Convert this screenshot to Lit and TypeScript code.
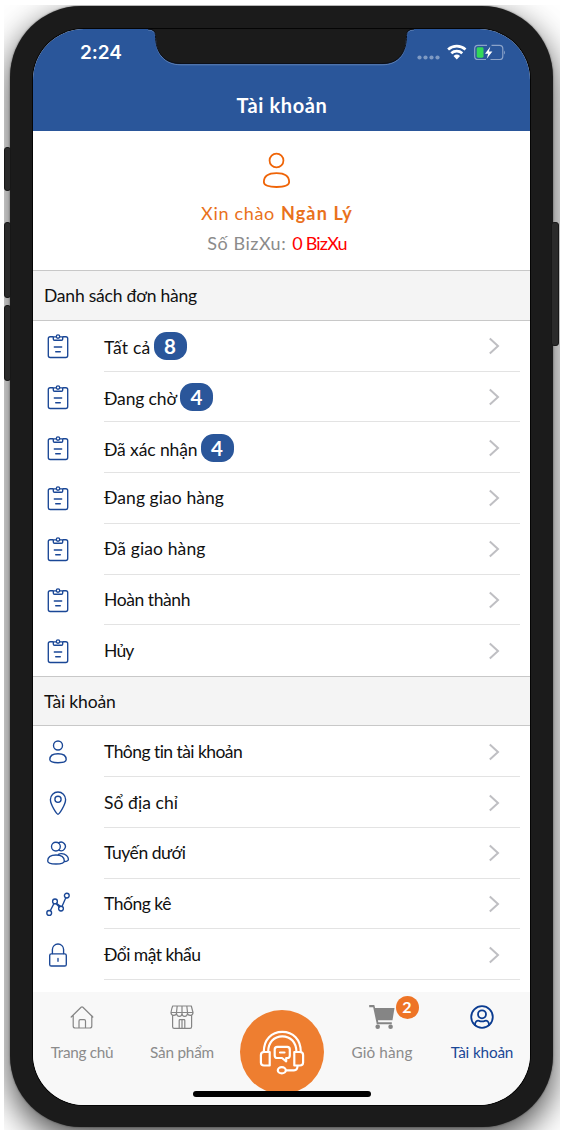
import { LitElement, html, css, svg } from "lit";
import { customElement, property } from "lit/decorators.js";

/** Text whose tracking is spread so that the run takes a set width. */
@customElement("fit-text")
class FitText extends LitElement {
  @property({ type: Number }) width = 0;
  @property() text = "";
  static styles = css`
    :host { display: inline-block; white-space: pre; }
    .run { display: inline-block; }
  `;
  render() {
    return html`<span class="run">${this.text}</span>`;
  }
  updated() {
    const run = this.renderRoot.querySelector(".run") as HTMLElement;
    run.style.letterSpacing = "0px";
    const natural = run.getBoundingClientRect().width;
    const count = [...this.text].length;
    run.style.letterSpacing = `${(this.width - natural) / count}px`;
  }
}

const fit = (text: string, width: number) => html`<fit-text .text=${text} .width=${width}></fit-text>`;

const icons: Record<string, unknown> = {
  order: svg`<path d="M7 2.7H4.2Q2.3 2.7 2.3 4.6V21.6Q2.3 23.5 4.2 23.5H19.8Q21.7 23.5 21.7 21.6V4.6Q21.7 2.7 19.8 2.7H17M7.3 3V5Q7.3 6.2 8.5 6.2H15.5Q16.7 6.2 16.7 5V3M7.3 2.9H10.2M13.8 2.9H16.7M8.3 13H15.7M9.7 17.7H14.3"/><circle cx="12" cy="2.5" r="1.7"/>`,
  user: svg`<circle cx="12" cy="5.5" r="4.5"/><path d="M3.8 19.5C3.8 15.2 7.5 13.7 12 13.7S20.2 15.2 20.2 19.5C20.2 21.6 17 22.7 12 22.7S3.8 21.6 3.8 19.5Z"/>`,
  pin: svg`<path d="M12 23.3C10.8 23.3 4.4 13.9 4.4 8.6A7.6 7.6 0 0 1 19.6 8.6C19.6 13.9 13.2 23.3 12 23.3Z"/><circle cx="12" cy="8.3" r="3.1"/>`,
  users: svg`<circle cx="9.9" cy="5.6" r="4.4"/><path d="M12.6 1.9A4.3 4.3 0 1 1 12.9 9.2M1.7 20C1.7 16.2 5 14 10 14S18.3 16.2 18.3 20C18.3 22.2 15 23 10 23S1.7 22.2 1.7 20ZM11.8 14.1Q12.6 12.4 15.6 12.6C19.6 12.9 22.4 15.4 22.4 18.2C22.4 20.1 20.8 20.4 18.3 20.6"/>`,
  chart: svg`<circle cx="3.2" cy="20.9" r="2.4"/><circle cx="9" cy="9.4" r="2.4"/><circle cx="15" cy="16.6" r="2.4"/><circle cx="20.8" cy="3.6" r="2.4"/><path d="M4.3 18.8L7.9 11.6M9.9 11.6L13.3 14.9M10.5 11.3L14.4 14.2M16 14.4L19.8 5.8"/>`,
  lock: svg`<rect x="3.7" y="10.8" width="16.6" height="12.2" rx="1.6"/><path d="M6.4 10.5V6.6A5.6 5.6 0 0 1 17.6 6.6V10.5M12 15.5V18.3"/>`,
  home: svg`<path d="M1.2 12L11.1 2.2Q12 1.4 12.9 2.2L22.8 12M3.2 10.6V21Q3.2 23 5.2 23H19.8Q21.8 23 21.8 21V10.6M9 22.8V16Q9 14.7 10.3 14.7H14.2Q15.5 14.7 15.5 16V22.8"/>`,
  shop: svg`<path d="M2.7 1H21.3L23 7.5H1Q1.7 3 2.7 1ZM7.2 1L6.5 7.3M12 1V7.3M16.8 1L17.5 7.3M1 7.5Q1 10.3 3.7 10.3Q6.4 10.3 6.5 8.3Q6.8 11.4 9.3 11.4Q12 11.4 12 8.3Q12 11.4 14.7 11.4Q17.2 11.4 17.5 8.3Q17.6 10.3 20.3 10.3Q23 10.3 23 7.5M2.6 10.3V21.7Q2.6 23.3 4.2 23.3H20Q21.6 23.3 21.6 21.7V10.3M9.2 23V15.4Q9.2 14.6 10 14.6H14Q14.8 14.6 14.8 15.4V23M12 14.8V23"/>`,
  cart: svg`<path d="M-.8 0H4.3L5.1 3H24.5L22.5 15.2H7.9L8.3 17.2H21.8V19.3H6.8L3.2 2.3H-.8Z" fill="currentColor" stroke="none"/><circle cx="7.7" cy="21.7" r="2.3" fill="currentColor" stroke="none"/><circle cx="20.6" cy="21.7" r="2.3" fill="currentColor" stroke="none"/>`,
  account: svg`<circle cx="12" cy="12" r="10.8"/><circle cx="12" cy="9.3" r="4"/><path d="M5 20C5 16.2 7 15.4 9 15.8Q12 17 15 15.8C17 15.4 19 16.2 19 20"/>`,
};

const icon = (name: string, cls = "icon") =>
  html`<svg class=${cls} viewBox="0 0 24 24" fill="none" stroke="currentColor">${icons[name]}</svg>`;

interface Row { label: string; width: number; icon: string; count?: number }

const orders: Row[] = [
  { label: "Tất cả", width: 46.5, icon: "order", count: 8 },
  { label: "Đang chờ", width: 73, icon: "order", count: 4 },
  { label: "Đã xác nhận", width: 93.5, icon: "order", count: 4 },
  { label: "Đang giao hàng", width: 120, icon: "order" },
  { label: "Đã giao hàng", width: 101.5, icon: "order" },
  { label: "Hoàn thành", width: 86, icon: "order" },
  { label: "Hủy", width: 29.5, icon: "order" },
];
const account: Row[] = [
  { label: "Thông tin tài khoản", width: 138.5, icon: "user" },
  { label: "Sổ địa chỉ", width: 74, icon: "pin" },
  { label: "Tuyến dưới", width: 81.5, icon: "users" },
  { label: "Thống kê", width: 67, icon: "chart" },
  { label: "Đổi mật khẩu", width: 96.5, icon: "lock" },
];

@customElement("app-root")
class AppRoot extends LitElement {
  static styles = css`
    :host { display: block; width: 563px; height: 1132px; overflow: hidden; background: #fff; font-family: Lato, "Open Sans", sans-serif; color: #111; box-sizing: border-box; padding: 5px 3px 2px 4px; }
    * { box-sizing: border-box; }
    svg { display: block; overflow: visible; }
    .backdrop { position: relative; height: 1125px; overflow: hidden; padding: 1px 7px 0 6px; background: #fff; }
    .phone { height: 1121px; border-radius: 71px; background: #1b1b1b; padding: 23px 23px 22px; box-shadow: 0 12px 34px rgba(0,0,0,.72), 0 0 2px #777; }
    .key { position: absolute; width: 7px; background: #2a2a2a; border: 1px solid #171717; border-radius: 3px; }
    .k1 { left: 0; top: 142px; height: 44px; }
    .k2 { left: 0; top: 217px; height: 76px; }
    .k3 { left: 0; top: 300px; height: 76px; }
    .k4 { right: 1px; top: 217px; height: 124px; width: 8px; }
    .screen { position: relative; height: 1076px; border-radius: 51px; overflow: hidden; background: #fff; display: flex; flex-direction: column; box-shadow: 0 0 0 1px #050505; }
    .top { height: 102px; flex: none; background: #2a569a; color: #fff; display: flex; flex-direction: column; }
    .notch { position: absolute; left: 115px; top: -1px; width: 266px; height: 38px; }
    .status { height: 47px; display: flex; justify-content: space-between; align-items: center; padding: 0 24px 0 47px; }
    .time { font: 600 19px/24px Inter, sans-serif; }
    .signal { display: flex; align-items: center; }
    .title { font-size: 20px; font-weight: 700; line-height: 24px; text-align: center; padding: 17px 0 0 1px; }
    .hello { height: 139.4px; flex: none; display: flex; flex-direction: column; align-items: center; padding-top: 21px; }
    .avatar { width: 37px; height: 37px; stroke-width: 1.15; color: #ef6407; margin-right: 10px; }
    .greet { display: flex; gap: 6px; font-size: 18px; line-height: 30px; color: #e9711c; margin: 9px 9px 0 0; }
    .coins { display: flex; gap: 6px; font-size: 18px; line-height: 30px; color: #8b8b8b; margin-right: 9px; }
    .greet b { font-weight: 700; }
    .red { color: #f00; }
    .head { height: 50.4px; flex: none; border-top: 1.5px solid #c8c8c8; border-bottom: 1.5px solid #c8c8c8; background: #f4f4f4; padding-left: 11px; font-size: 17.5px; line-height: 49.4px; }
    .row { height: 50.75px; flex: none; display: flex; align-items: center; padding: 0 10px 0 13px; }
    .icon { width: 24px; height: 24px; stroke-width: 1.35; color: #1a4796; flex: none; stroke-linecap: round; stroke-linejoin: round; }
    .cell { flex: 1; align-self: stretch; margin-left: 34px; border-bottom: 1px solid #e3e3e3; display: flex; align-items: center; font-size: 17.5px; line-height: 24px; padding-top: 1px; }
    .last .cell { border-bottom-color: transparent; }
    .counted { padding-top: 4px; }
    .count { width: 33px; height: 28px; border-radius: 12.5px; margin-left: 3px; background: #2a569a; color: #fff; font-size: 20.5px; font-weight: 700; line-height: 28px; text-align: center; }
    .chevron { width: 10px; height: 18px; margin-left: auto; margin-right: 21px; }
    .tabs { position: absolute; left: 0; right: 0; bottom: 0; height: 113px; background: #f8f8f8; display: grid; grid-template-columns: repeat(5, 100px); }
    .tab { position: relative; display: flex; flex-direction: column; align-items: center; padding: 12.5px 2px 0 0; color: #8b8b8b; font-size: 15.3px; line-height: 20px; gap: 13.5px; }
    .tab .icon { color: #858585; stroke-width: 1.2; }
    .tab.on { color: #1a4796; }
    .tab.on .icon { color: #0b3c91; stroke-width: 1.8; }
    .badge { position: absolute; left: 62.5px; top: 4px; width: 23px; height: 22.5px; border-radius: 12px; background: #ee7426; color: #fff; font-size: 16px; font-weight: 700; line-height: 22px; text-align: center; }
    .help { width: 84px; height: 84px; margin-top: 5.5px; border-radius: 50%; background: #ee7e30; flex: none; display: grid; place-items: center; }
    .bar { position: absolute; left: 160px; bottom: 8px; width: 178px; height: 6px; border-radius: 3px; background: #000; }
  `;

  row(r: Row, last: boolean) {
    return html`<div class="row ${last ? "last" : ""}">
      ${icon(r.icon)}
      <div class="cell">
        <span class=${r.count ? "counted" : ""}>${fit(r.label, r.width)}</span>
        ${r.count ? html`<span class="count">${r.count}</span>` : ""}
        <svg class="chevron" viewBox="0 0 10 18"><path d="M.8 1.5L9 9L.8 16.5" fill="none" stroke="#bfbfc3" stroke-width="2"/></svg>
      </div>
    </div>`;
  }

  tab(name: string, label: string, width: number, on = false, badge = 0) {
    return html`<div class="tab ${on ? "on" : ""}">
      ${icon(name)}<span>${fit(label, width)}</span>
      ${badge ? html`<span class="badge">${badge}</span>` : ""}
    </div>`;
  }

  render() {
    return html`<div class="backdrop">
      <div class="phone">
        <div class="screen">
          <div class="top">
            <div class="status">
              <span class="time">${fit("2:24", 42)}</span>
              <svg width="90" height="20" viewBox="0 0 90 20">
                <g fill="#7f9ac3"><circle cx="3.5" cy="14.5" r="2.1"/><circle cx="9.5" cy="14.5" r="2.1"/><circle cx="15.5" cy="14.5" r="2.1"/><circle cx="21.5" cy="14.5" r="2.1"/></g>
                <g fill="none" stroke="#fff" stroke-width="2.7"><path d="M32.1 6.5A13 13 0 0 1 49.5 6.5"/><path d="M35.3 10.2A8.3 8.3 0 0 1 46.3 10.2"/></g>
                <path d="M37.5 13A5 5 0 0 1 44.1 13L40.8 16.4Z" fill="#fff"/>
                <path d="M71 2.4H62Q58.7 2.4 58.7 5.7V13.2Q58.7 16.5 62 16.5H70M75.5 2.4H83.5Q86.8 2.4 86.8 5.7V13.2Q86.8 16.5 83.5 16.5H74.5" fill="none" stroke="#8ba3c9" stroke-width="1.2"/>
                <path d="M88.1 7.4Q90 9.5 88.1 11.6Z" fill="#8ba3c9"/>
                <rect x="60.7" y="4.3" width="6.8" height="10.4" rx="1.4" fill="#32d758"/>
                <path d="M74.4 3.5L69 10.7H72.2L70.7 15.7L76.4 8.4H72.9Z" fill="#fff"/>
              </svg>
            </div>
            <div class="title">${fit("Tài khoản", 91)}</div>
            <svg class="notch" viewBox="148 28 266 38">
              <path d="M148 28V29.5Q155.5 29.5 155.5 36C155.5 53 164 64 181 64H382C399 64 406.5 53 406.5 36Q406.5 29.5 414 29.5V28Z" fill="#1b1b1b"/>
              <path d="M148 29.5Q155.5 29.5 155.5 36C155.5 53 164 64.3 181 64.3H382C399 64.3 406.5 53 406.5 36Q406.5 29.5 414 29.5" fill="none" stroke="#5d7fb3" stroke-width="1" transform="translate(0 .5)"/>
              <path d="M148 29.5Q155.5 29.5 155.5 36C155.5 53 164 64 181 64H382C399 64 406.5 53 406.5 36Q406.5 29.5 414 29.5" fill="none" stroke="#0b0f18" stroke-width="1" transform="translate(0 -.5)"/>
            </svg>
          </div>
          <div class="hello">
            ${icon("user", "avatar")}
            <div class="greet">${fit("Xin chào", 74)}<b>${fit("Ngàn Lý", 72)}</b></div>
            <div class="coins">${fit("Số BizXu:", 79)}<span class="red">${fit("0 BizXu", 54.5)}</span></div>
          </div>
          <div class="head">${fit("Danh sách đơn hàng", 153)}</div>
          ${orders.map((r, i) => this.row(r, i === orders.length - 1))}
          <div class="head">${fit("Tài khoản", 71.5)}</div>
          ${account.map((r) => this.row(r, false))}
          <div class="tabs">
            ${this.tab("home", "Trang chủ", 62.5)}
            ${this.tab("shop", "Sản phẩm", 64)}
            <div class="tab">
              <div class="help">
                <svg width="44" height="44" viewBox="0 0 44 44" fill="none" stroke="#fff" stroke-width="2.2" stroke-linejoin="round" stroke-linecap="round">
                  <path d="M3.8 21.8C3.8 9.5 11.5 1.8 22.3 1.8S40.8 9.5 40.8 21.8M8.2 21.8C8.2 12.5 14 6.3 22.3 6.3S36.4 12.5 36.4 21.8"/>
                  <path d="M9.7 22H4Q.9 22 .9 25V32.5Q.9 35.5 4 35.5H9.7ZM34.3 22H40Q43.1 22 43.1 25V32.5Q43.1 35.5 40 35.5H34.3Z"/>
                  <path d="M17.3 16.8H27.2Q29.8 16.8 29.8 19.4V25.4Q29.8 28 27.2 28H26.2V31.3L22 28H17.3Q14.7 28 14.7 25.4V19.4Q14.7 16.8 17.3 16.8ZM20 22.5H24.5"/>
                  <ellipse cx="21.8" cy="40.3" rx="4" ry="3.1"/><path d="M26 40.3H34Q37.5 40.3 37.5 36"/>
                </svg>
              </div>
            </div>
            ${this.tab("cart", "Giỏ hàng", 61, false, 2)}
            ${this.tab("account", "Tài khoản", 62.5, true)}
          </div>
          <div class="bar"></div>
        </div>
      </div>
      <div class="key k1"></div><div class="key k2"></div><div class="key k3"></div><div class="key k4"></div>
    </div>`;
  }
}
